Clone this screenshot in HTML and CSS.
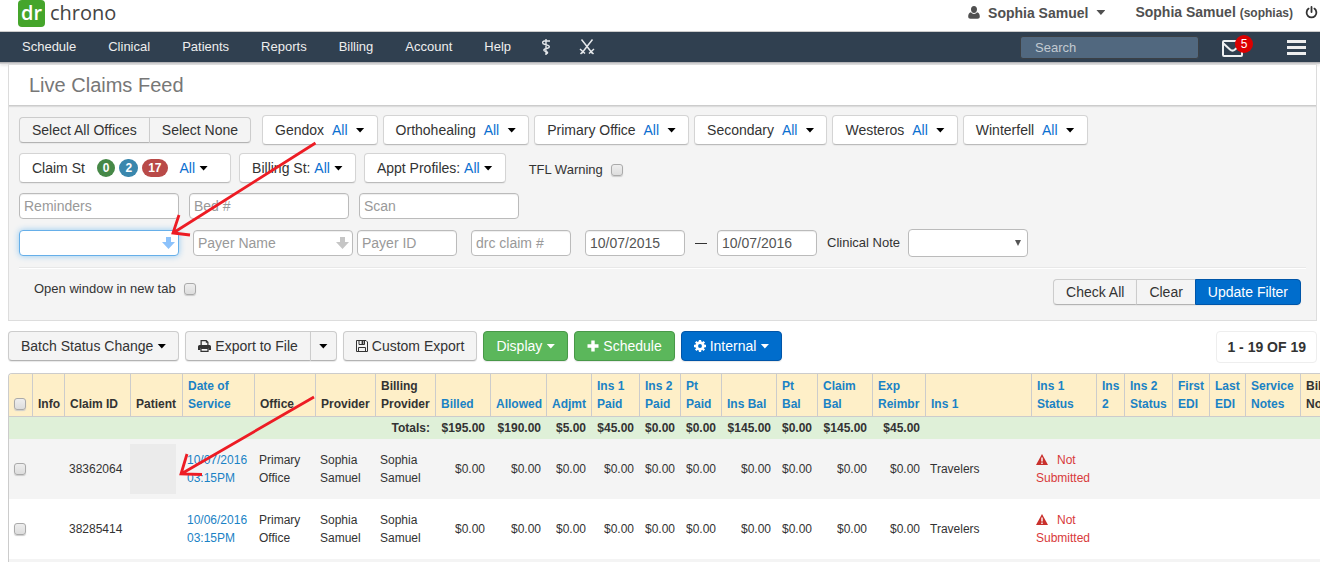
FILE: index.html
```html
<!DOCTYPE html>
<html lang="en">
<head>
<meta charset="utf-8">
<title>Live Claims Feed</title>
<link rel="stylesheet" href="styles.css">
</head>
<body>
<div class="page">
<header class="topbar">
  <a class="logo" href="#"><span class="logo-mark">dr</span><span class="logo-name">chrono</span></a>
  <div class="account">
    <button class="user-menu" type="button">
      <svg class="icon-user" viewBox="0 0 12 13" width="12" height="13"><path d="M6 0C7.9 0 9 1.4 9 3.3 9 5.4 7.9 7 6 7S3 5.4 3 3.3C3 1.400 4.100 0 6 0zM3 6.300C3.800 7.300 4.800 8 6 8s2.200-.7 3-1.700c2 .2 2.800 2.200 2.800 4.200 0 1.500-.8 2.200-2.300 2.200h-7C1 12.700.2 12 .2 10.500.2 8.500 1 6.500 3 6.300z" fill="#505050"/></svg>
      <b>Sophia Samuel</b><i class="caret"></i>
    </button>
    <a class="user-name" href="#"><b>Sophia Samuel</b> <small>(sophias)</small></a>
    <a class="power" href="#" aria-label="Log out"><svg viewBox="0 0 13 13" width="13" height="13" fill="none" stroke="#333" stroke-width="1.800" stroke-linecap="round"><path d="M6.500 1v5M3.600 2.600a4.900 4.900 0 1 0 5.800 0"/></svg></a>
  </div>
</header>
<nav class="navbar">
  <a href="#">Schedule</a><a href="#">Clinical</a><a href="#">Patients</a><a href="#">Reports</a><a href="#">Billing</a><a href="#">Account</a><a href="#">Help</a>
  <a class="nav-icon" href="#" aria-label="Medical"><svg viewBox="0 0 10 16" width="10" height="16" fill="none" stroke="#e6e9ec" stroke-width="1.400"><path d="M5 0v16M9 2H3.500C1 2 1 5 3.500 5.300L7 6.300c2 .7 1.700 2.700-.5 3L4 10c-1.700.6-1.500 2 .3 2.400l1.700.5c1 .5.7 1.600-1 2"/></svg></a>
  <a class="nav-icon" href="#" aria-label="Tools"><svg viewBox="0 0 16 16" width="16" height="16" fill="none" stroke="#e6e9ec" stroke-width="1.500"><path d="M2.500.5l11 14M13.500.5l-11 14M1 10l5 4.500M15 10l-5 4.500M1.500 15l2-2M14.500 15l-2-2"/></svg></a>
  <div class="nav-right">
    <input class="search" type="text" placeholder="Search" aria-label="Search">
    <a class="mail" href="#" aria-label="Messages"><svg viewBox="0 0 22 17" width="22" height="17" fill="none" stroke="#eef0f2" stroke-width="2"><rect x="1" y="1" width="19" height="15" rx="1"/><path d="M1.500 3.500l6.500 6q2.500 2.300 5 0l6.500-6"/></svg><span class="mail-count">5</span></a>
    <button class="burger" type="button" aria-label="Menu"><i></i><i></i><i></i></button>
  </div>
</nav>
<main>
  <section class="panel">
    <h1>Live Claims Feed</h1>
    <form class="filters">
      <div class="row row-offices">
        <div class="group"><button type="button" class="btn small">Select All Offices</button><button type="button" class="btn small">Select None</button></div>
        <div class="offices">
          <button type="button" class="btn office">Gendox <em>All</em><i class="caret"></i></button>
          <button type="button" class="btn office">Orthohealing <em>All</em><i class="caret"></i></button>
          <button type="button" class="btn office">Primary Office <em>All</em><i class="caret"></i></button>
          <button type="button" class="btn office">Secondary <em>All</em><i class="caret"></i></button>
          <button type="button" class="btn office">Westeros <em>All</em><i class="caret"></i></button>
          <button type="button" class="btn office">Winterfell <em>All</em><i class="caret"></i></button>
        </div>
      </div>
      <div class="row row-status">
        <button type="button" class="btn status claim-status">Claim St <span class="badges"><span class="badge green">0</span><span class="badge blue">2</span><span class="badge red">17</span></span><em>All</em><i class="caret"></i></button>
        <button type="button" class="btn status">Billing St: <em>All</em><i class="caret"></i></button>
        <button type="button" class="btn status">Appt Profiles: <em>All</em><i class="caret"></i></button>
        <label class="check tfl">TFL Warning <input type="checkbox"></label>
      </div>
      <div class="row row-inputs">
        <input class="field" type="text" placeholder="Reminders" aria-label="Reminders">
        <input class="field" type="text" placeholder="Bed #" aria-label="Bed number">
        <input class="field" type="text" placeholder="Scan" aria-label="Scan">
      </div>
      <div class="row row-search">
        <span class="combo"><input class="field active" type="text" aria-label="Patient"><svg class="down" viewBox="0 0 13 12" width="13" height="12"><path d="M4 0h5v5h4l-6.500 7L0 5h4z" fill="#8cc2fb"/></svg></span>
        <div class="payer">
          <span class="combo"><input class="field" type="text" placeholder="Payer Name" aria-label="Payer name"><svg class="down" viewBox="0 0 13 12" width="13" height="12"><path d="M4 0h5v5h4l-6.500 7L0 5h4z" fill="#c6c6c6"/></svg></span>
          <input class="field short" type="text" placeholder="Payer ID" aria-label="Payer ID">
        </div>
        <input class="field short" type="text" placeholder="drc claim #" aria-label="drc claim number">
        <div class="dates">
          <input class="field short" type="text" value="10/07/2015" aria-label="From date"><i class="dash"></i><input class="field short" type="text" value="10/07/2016" aria-label="To date">
          <label class="note">Clinical Note <select><option></option></select></label>
        </div>
      </div>
      <hr>
      <div class="row row-actions">
        <label class="check">Open window in new tab <input type="checkbox"></label>
        <div class="group"><button type="button" class="btn small">Check All</button><button type="button" class="btn small">Clear</button><button type="button" class="btn small primary">Update Filter</button></div>
      </div>
    </form>
  </section>

  <div class="toolbar">
    <button type="button" class="btn">Batch Status Change<i class="caret"></i></button>
    <div class="group">
      <button type="button" class="btn"><svg viewBox="0 0 13 12" width="13" height="12"><path d="M2.500 0h6l2 2v4h-8z" fill="#333"/><path d="M3.800 1.200h4v1.600h1.500V6H3.800z" fill="#f4f4f4"/><path d="M1.500 5h10Q13 5 13 6.500V10h-2.500V8h-8v2H0V6.500Q0 5 1.500 5z" fill="#333"/><path d="M3 8.500h7V11.300H3z" fill="#f4f4f4" stroke="#333" stroke-width="1.200"/></svg>Export to File</button>
      <button type="button" class="btn split" aria-label="Export options"><i class="caret"></i></button>
    </div>
    <button type="button" class="btn"><svg viewBox="0 0 12 12" width="12" height="12" fill="none" stroke="#333"><path d="M.5.500h9.500l1.500 1.500v9.500H.5zM2.500 11.500v-4h7v4M3 .5v4h5.500v-4"/><path d="M6.500 1v3" stroke-width="1.800"/></svg>Custom Export</button>
    <button type="button" class="btn success">Display<i class="caret"></i></button>
    <button type="button" class="btn success"><svg viewBox="0 0 12 12" width="12" height="12"><path d="M4.300.5h3.400v3.800h3.800v3.400H7.700v3.800H4.300V7.700H.5V4.300h3.800z" fill="#fff"/></svg>Schedule</button>
    <button type="button" class="btn primary"><svg viewBox="0 0 12 12" width="12" height="12" fill="none" stroke="#fff"><circle cx="6" cy="6" r="3.300" stroke-width="2.700"/><path d="M6 0v2M6 10v2M0 6h2M10 6h2M1.800 1.800l1.400 1.400M8.800 8.800l1.400 1.400M1.800 10.200l1.400-1.400M8.800 3.200l1.400-1.400" stroke-width="2.300"/></svg>Internal<i class="caret"></i></button>
    <span class="pager">1 - 19 OF 19</span>
  </div>

  <div class="claims-wrap">
  <table class="claims">
    <colgroup>
      <col class="w23"><col class="w32"><col class="w66"><col class="w52"><col class="w72"><col class="w61"><col class="w60"><col class="w60"><col class="w55"><col class="w56"><col class="w45"><col class="w48"><col class="w41"><col class="w41"><col class="w55"><col class="w41"><col class="w55"><col class="w53"><col class="w106"><col class="w65"><col class="w28"><col class="w48"><col class="w37"><col class="w36"><col class="w55"><col class="w56">
    </colgroup>
    <thead>
      <tr><th><input type="checkbox" aria-label="Select all"></th><th>Info</th><th>Claim ID</th><th>Patient</th><th><a href="#">Date of Service</a></th><th>Office</th><th>Provider</th><th>Billing Provider</th><th><a href="#">Billed</a></th><th><a href="#">Allowed</a></th><th><a href="#">Adjmt</a></th><th><a href="#">Ins 1 Paid</a></th><th><a href="#">Ins 2 Paid</a></th><th><a href="#">Pt<br>Paid</a></th><th><a href="#">Ins Bal</a></th><th><a href="#">Pt<br>Bal</a></th><th><a href="#">Claim Bal</a></th><th><a href="#">Exp Reimbr</a></th><th><a href="#">Ins 1</a></th><th><a href="#">Ins 1<br>Status</a></th><th><a href="#">Ins<br>2</a></th><th><a href="#">Ins 2 Status</a></th><th><a href="#">First EDI</a></th><th><a href="#">Last EDI</a></th><th><a href="#">Service Notes</a></th><th>Billing Notes</th></tr>
    </thead>
    <tbody>
      <tr class="totals"><td colspan="8">Totals:</td><td>$195.00</td><td>$190.00</td><td>$5.00</td><td>$45.00</td><td>$0.00</td><td>$0.00</td><td>$145.00</td><td>$0.00</td><td>$145.00</td><td>$45.00</td><td colspan="8"></td></tr>
      <tr class="claim odd"><td><input type="checkbox" aria-label="Select claim 38362064"></td><td></td><td>38362064</td><td class="patient"><div class="redacted"></div></td><td><a href="#">10/07/2016 03:15PM</a></td><td>Primary Office</td><td>Sophia Samuel</td><td>Sophia Samuel</td><td class="num">$0.00</td><td class="num">$0.00</td><td class="num">$0.00</td><td class="num">$0.00</td><td class="num">$0.00</td><td class="num">$0.00</td><td class="num">$0.00</td><td class="num">$0.00</td><td class="num">$0.00</td><td class="num">$0.00</td><td>Travelers</td><td class="alert"><svg viewBox="0 0 12 11" width="12" height="11"><path d="M6 0l6 11H0z" fill="#c9302c"/><path d="M6 3.500v4M6 8.500V10" stroke="#fff" stroke-width="1.400"/></svg>Not Submitted</td><td></td><td></td><td></td><td></td><td></td><td></td></tr>
      <tr class="claim"><td><input type="checkbox" aria-label="Select claim 38285414"></td><td></td><td>38285414</td><td></td><td><a href="#">10/06/2016 03:15PM</a></td><td>Primary Office</td><td>Sophia Samuel</td><td>Sophia Samuel</td><td class="num">$0.00</td><td class="num">$0.00</td><td class="num">$0.00</td><td class="num">$0.00</td><td class="num">$0.00</td><td class="num">$0.00</td><td class="num">$0.00</td><td class="num">$0.00</td><td class="num">$0.00</td><td class="num">$0.00</td><td>Travelers</td><td class="alert"><svg viewBox="0 0 12 11" width="12" height="11"><path d="M6 0l6 11H0z" fill="#c9302c"/><path d="M6 3.500v4M6 8.500V10" stroke="#fff" stroke-width="1.400"/></svg>Not Submitted</td><td></td><td></td><td></td><td></td><td></td><td></td></tr>
      <tr class="claim odd"><td colspan="26"></td></tr>
    </tbody>
  </table>
  </div>
</main>
<svg class="annotations" width="1320" height="562" viewBox="0 0 1320 562" fill="none" stroke="#ed1c24" stroke-width="2.800" aria-hidden="true"><path d="M315.500 143L173 233M179 215l-6 18 17 2M314 397L181 474M187 454l-6 20 21 .5"/></svg>
</div>
</body>
</html>
```
FILE: styles.css
```css
* { box-sizing: border-box; }
body { margin: 0; background: #fff; color: #333; font-family: "Liberation Sans", Arial, sans-serif; font-size: 14px; line-height: 20px; }
a { color: #1a82c5; text-decoration: none; }
button, input, select { font: inherit; color: inherit; margin: 0; }
button { cursor: pointer; }
i, em { font-style: normal; }
.page { position: relative; height: 100vh; overflow: hidden; }
.annotations { position: absolute; left: 0; top: 0; pointer-events: none; }
.caret { display: inline-block; width: 9px; height: 5px; background: currentColor; clip-path: polygon(0 0, 100% 0, 50% 100%); }

/* Top bar */
.topbar { display: flex; justify-content: space-between; height: 32px; padding: 0 2px 0 18px; border-bottom: 1px solid #ccc; }
.logo { display: flex; gap: 5px; height: 27px; font-family: "Open Sans", "Noto Sans", sans-serif; font-size: 20px; line-height: 25px; color: #444; }
.logo-mark { width: 27px; background: #45a52b; color: #fff; font-weight: 600; text-align: center; border-radius: 4px; }
.account { display: flex; align-items: center; height: 25px; color: #505050; }
.account b { font-size: 14px; }
.user-menu { display: flex; align-items: center; gap: 8px; padding: 0; border: 0; background: none; color: #505050; }
.user-name { margin: 0 12px 0 30px; color: #505050; }
.user-name small { font-size: 12px; font-weight: bold; }
.power { display: flex; }

/* Navigation */
.navbar { display: flex; align-items: center; gap: 2px; height: 30px; padding: 0 14px 0 7px; background: #304050; box-shadow: 0 1px 0 #b5b5b8, 0 2px 0 #d0d0d2, 0 3px 3px #ddd; font-size: 13px; }
.navbar > a { display: flex; padding: 0 15px; color: #eee; }
.navbar > .nav-icon { padding: 0 13px; }
.nav-right { display: flex; align-items: center; margin-left: auto; }
.search { width: 179px; height: 23px; padding: 0 14px; border: 1px solid #3b4045; border-radius: 3px; background: #51687f; color: #fff; }
.search::placeholder { color: #c2cad1; }
.mail { position: relative; display: flex; margin: 2px 43px 0 23px; }
.mail-count { position: absolute; left: 13px; top: -5px; width: 18px; height: 18px; border-radius: 9px; background: #dc0000; color: #fff; font-size: 12px; line-height: 18px; text-align: center; }
.burger { display: grid; gap: 3px; width: 19px; padding: 0; border: 0; background: none; }
.burger i { height: 3px; background: #eee; }

/* Filter panel */
main { padding: 2px 3px 0 8px; }
.panel { border: 1px solid #ddd; background: #f4f4f4; }
h1 { margin: 0; padding: 10px 20px; border-bottom: 1px solid #ccc; background: #fff; color: #777; font-size: 20px; font-weight: normal; line-height: 20px; box-shadow: 0 1px 1px #ddd; }
.filters { padding: 9px 10px 15px; }
.row { display: flex; align-items: center; }
.btn { display: flex; align-items: center; height: 30px; padding: 0 12px; border: 1px solid #ccc; border-bottom-color: #b3b3b3; border-radius: 4px; background: #f4f4f4; white-space: pre; box-shadow: 0 1px 1px #e8e8e8; }
.btn .caret { margin-left: 4px; color: #000; }
.btn em { color: #0a6fd0; }
.btn.small { height: 26px; }
.btn.office, .btn.status { border-color: #d4d4d4; border-bottom-color: #bbb; background: #fff; }
.btn.office em { margin-left: 4px; }
.btn.office .caret { margin-left: 8px; }
.btn.primary { background: #006dcc; border-color: #0055a8; color: #fff; }
.btn.success { background: #5bb75b; border-color: #489848; color: #fff; }
.btn.primary .caret, .btn.success .caret { color: #fff; }
.btn svg { margin-right: 4px; }
.group { display: flex; }
.group .btn:not(:first-child) { border-top-left-radius: 0; border-bottom-left-radius: 0; }
.group .btn:not(:last-child) { border-right: 0; border-top-right-radius: 0; border-bottom-right-radius: 0; }
.row-offices { gap: 11px; }
.offices { display: flex; gap: 5px; }
.row-status { gap: 8px; margin-top: 8px; }
.btn.claim-status { padding-right: 22px; }
.badges { display: flex; gap: 4px; margin: 0 12px 0 8px; }
.badge { padding: 0 6px; border-radius: 9px; color: #fff; font-size: 12px; font-weight: bold; line-height: 18px; }
.badge.green { background: #468847; }
.badge.blue { background: #3a87ad; }
.badge.red { background: #b94a48; }
.check { display: flex; align-items: center; gap: 8px; font-size: 13px; }
.tfl { padding: 4px 0 0 15px; }
input[type="checkbox"] { appearance: none; width: 12px; height: 12px; border: 1px solid #aaa; border-radius: 3px; background: linear-gradient(#eee, #ddd); box-shadow: 0 1px 1px #ccc; }
.row-inputs { gap: 10px; margin-top: 10px; }
.field { width: 160px; height: 26px; padding: 0 4px; border: 1px solid #bbb; border-radius: 4px; background: #fff; color: #555; box-shadow: inset 0 1px 1px #eee; }
.field::placeholder { color: #999; }
.field.short { width: 100px; }
.field.active { border-color: #66afe9; box-shadow: 0 0 6px #94caf2; }
.row-search { gap: 14px; margin-top: 10px; }
.combo { position: relative; display: flex; }
.down { position: absolute; right: 4px; top: 7px; }
.payer { display: flex; gap: 4px; }
.dates { display: flex; align-items: center; gap: 10px; }
.dash { width: 12px; height: 1px; background: #333; }
.note { position: relative; display: flex; align-items: center; gap: 8px; font-size: 13px; }
.note select { appearance: none; width: 120px; height: 28px; border: 1px solid #bbb; border-radius: 4px; background: #fff; }
.note::after { content: ""; position: absolute; right: 7px; top: 11px; width: 6px; height: 6px; background: #555; clip-path: polygon(0 0, 100% 0, 50% 100%); }
hr { height: 2px; margin: 10px 0; border: 0; border-top: 1px solid #e8e8e8; background: #fff; }
.row-actions { justify-content: space-between; padding: 0 5px 0 15px; }
.row-actions .check { align-self: flex-start; }

/* Toolbar */
.toolbar { display: flex; gap: 6px; margin-top: 10px; }
.group .split { padding: 0 8px; }
.toolbar .split .caret { margin: 0; }
.pager { margin-left: auto; padding: 5px 10px; border: 1px solid #eee; border-radius: 4px; font-weight: bold; }

/* Claims table */
.claims-wrap { margin: 10px -3px 0 0; overflow: hidden; border: 1px solid #ccc; border-width: 1px 0 0 1px; border-radius: 4px 0 0 0; }
.claims { width: 1347px; table-layout: fixed; border-spacing: 0; font-size: 12px; line-height: 18px; }
th { padding: 3px 5px; border-left: 1px solid #ccc; border-bottom: 1px solid #ccc; background: #feefc8; text-align: left; vertical-align: bottom; }
th:first-child { border-left: 0; }
td { height: 60px; padding: 0 5px; }
th input, td input { display: block; }
th input[type="checkbox"] { margin-bottom: 3px; }
.totals td { height: 22px; background: #dff0d8; font-weight: bold; text-align: right; }
.odd td { background: #f4f4f4; }
.num { text-align: right; }
td.patient { padding: 0; }
.redacted { width: 46px; height: 50px; background: #ebebeb; }
.alert { color: #d8393b; }
.alert svg { margin: 0 9px 0 0; vertical-align: -1px; }
.w23 { width: 23px; } .w28 { width: 28px; } .w32 { width: 32px; } .w36 { width: 36px; } .w37 { width: 37px; }
.w41 { width: 41px; } .w45 { width: 45px; } .w48 { width: 48px; } .w52 { width: 52px; } .w53 { width: 53px; }
.w55 { width: 55px; } .w56 { width: 56px; } .w60 { width: 60px; } .w61 { width: 61px; } .w65 { width: 65px; }
.w66 { width: 66px; } .w72 { width: 72px; } .w106 { width: 106px; }
```
